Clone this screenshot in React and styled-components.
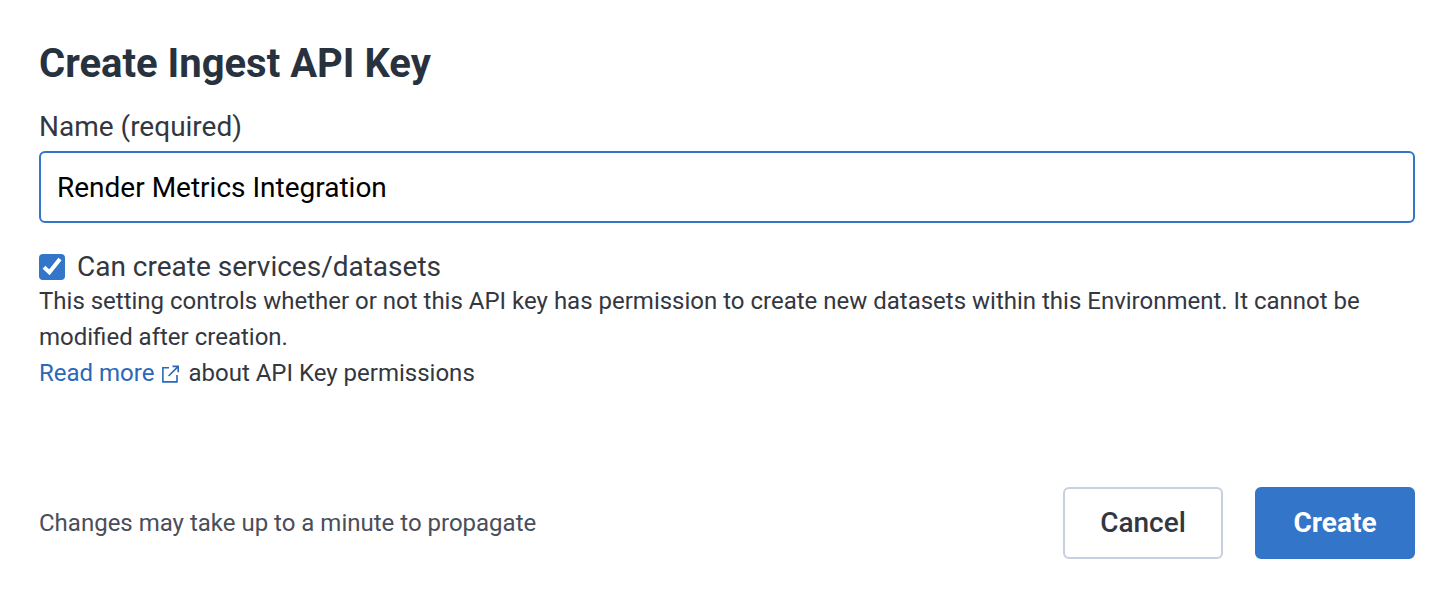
import React, { useState } from 'react';
import styled, { createGlobalStyle } from 'styled-components';

export default function App() {
  const [name, setName] = useState('Render Metrics Integration');
  const [canCreate, setCanCreate] = useState(true);

  return (
    <>
      <GlobalStyle />
      <KeyForm onSubmit={(e) => e.preventDefault()}>
        <Title>Create Ingest API Key</Title>
        <Label htmlFor="name">Name (required)</Label>
        <TextInput
          id="name"
          type="text"
          value={name}
          onChange={(e) => setName(e.currentTarget.value)}
        />
        <CheckRow>
          <Checkbox
            id="canCreate"
            type="checkbox"
            checked={canCreate}
            onChange={(e) => setCanCreate(e.currentTarget.checked)}
          />
          <Label htmlFor="canCreate">Can create services/datasets</Label>
          <CheckMark viewBox="0 0 26 26" aria-hidden="true">
            <path d="M5 13.2 L10.4 18.2 L21 5" />
          </CheckMark>
        </CheckRow>
        <HelpText>
          This setting controls whether or not this API key has permission to
          create new datasets within this Environment. It cannot be modified
          after creation.
        </HelpText>
        <HelpText>
          <ReadMore href="#permissions">
            Read more
            <ExternalIcon viewBox="0 0 18 20" aria-hidden="true">
              <path d="M8 4.8H1.9V18.9H16V12M11.5 3.4H17.2V9.2M17.2 3.4L7.6 13" />
            </ExternalIcon>
          </ReadMore>
          about API Key permissions
        </HelpText>
        <Footer>
          <Note>Changes may take up to a minute to propagate</Note>
          <Buttons>
            <Button type="button">Cancel</Button>
            <Button type="submit" $primary>
              Create
            </Button>
          </Buttons>
        </Footer>
      </KeyForm>
    </>
  );
}

const GlobalStyle = createGlobalStyle`
  * {
    box-sizing: border-box;
  }

  body {
    margin: 0;
    background: #ffffff;
    color: #33373f;
    font-family: Roboto, 'Liberation Sans', sans-serif;
  }
`;

const KeyForm = styled.form`
  display: flex;
  flex-direction: column;
  padding: 40px 41px 43px 39px;
`;

const Title = styled.h1`
  margin: 0 0 23px;
  color: #28323f;
  font-size: 40px;
  font-weight: 700;
  line-height: 48px;
`;

const Label = styled.label`
  font-size: 28px;
  line-height: 32px;
`;

const TextInput = styled.input`
  width: 100%;
  height: 72px;
  margin: 8px 0 28px;
  padding: 0 16px;
  border: 2px solid #3375c8;
  border-radius: 6px;
  outline: none;
  background: #ffffff;
  color: #000000;
  font-family: inherit;
  font-size: 28px;
`;

const CheckRow = styled.div`
  display: flex;
  position: relative;
  align-items: center;
  gap: 12px;
`;

const Checkbox = styled.input`
  appearance: none;
  width: 26px;
  height: 26px;
  margin: 0;
  border: 2px solid #3375c8;
  border-radius: 4px;

  &:checked {
    background: #3375c8;
  }

  &:not(:checked) ~ svg {
    display: none;
  }
`;

const CheckMark = styled.svg`
  position: absolute;
  left: 0;
  width: 26px;
  height: 26px;
  fill: none;
  stroke: #ffffff;
  stroke-width: 4;
  pointer-events: none;
`;

const HelpText = styled.p`
  margin: 0;
  font-size: 24px;
  line-height: 36px;
`;

const ReadMore = styled.a`
  display: inline-flex;
  align-items: center;
  gap: 7px;
  margin-right: 9px;
  color: #2a68b8;
  text-decoration: none;
`;

const ExternalIcon = styled.svg`
  width: 18px;
  height: 20px;
  fill: none;
  stroke: currentColor;
  stroke-width: 1.6;
`;

const Footer = styled.div`
  display: flex;
  align-items: center;
  justify-content: space-between;
  margin-top: 96px;
`;

const Note = styled.span`
  color: #4a4e58;
  font-size: 24px;
  line-height: 36px;
`;

const Buttons = styled.div`
  display: flex;
  gap: 32px;
`;

const Button = styled.button`
  min-width: 160px;
  height: 72px;
  padding: 0 24px 2px;
  border: 2px solid ${({ $primary }) => ($primary ? '#3375c8' : '#c8d0e0')};
  border-radius: 6px;
  background: ${({ $primary }) => ($primary ? '#3375c8' : '#ffffff')};
  color: ${({ $primary }) => ($primary ? '#ffffff' : '#33373f')};
  font-family: inherit;
  font-size: 28px;
  font-weight: ${({ $primary }) => ($primary ? 700 : 500)};
`;
